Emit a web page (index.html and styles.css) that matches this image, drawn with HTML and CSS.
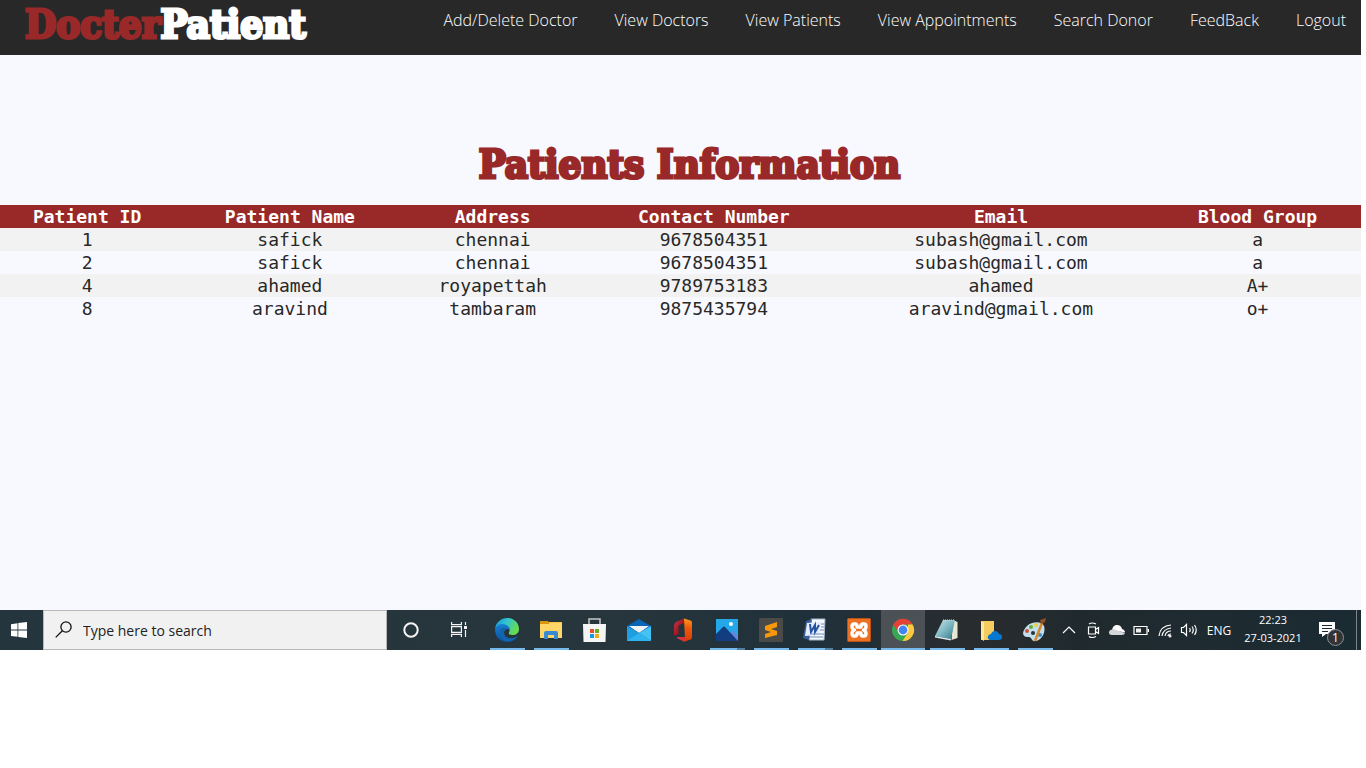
FILE: index.html
```html
<!DOCTYPE html>
<html lang="en">
<head>
<meta charset="utf-8">
<title>Patients Information</title>
<link rel="stylesheet" href="styles.css">
</head>
<body>
<div class="screen">
  <header class="site-header">
    <a class="logo" href="#"><span class="logo-accent">Docter</span>Patient</a>
    <nav class="site-nav">
      <a href="#">Add/Delete Doctor</a>
      <a href="#">View Doctors</a>
      <a href="#">View Patients</a>
      <a href="#">View Appointments</a>
      <a href="#">Search Donor</a>
      <a href="#">FeedBack</a>
      <a href="#">Logout</a>
    </nav>
  </header>

  <main class="content">
    <h1 class="title">Patients Information</h1>
    <table class="patients">
      <colgroup><col class="c-id"><col class="c-name"><col class="c-address"><col class="c-contact"><col class="c-email"><col class="c-blood"></colgroup>
      <thead>
        <tr><th>Patient ID</th><th>Patient Name</th><th>Address</th><th>Contact Number</th><th>Email</th><th>Blood Group</th></tr>
      </thead>
      <tbody>
        <tr><td>1</td><td>safick</td><td>chennai</td><td>9678504351</td><td>subash@gmail.com</td><td>a</td></tr>
        <tr><td>2</td><td>safick</td><td>chennai</td><td>9678504351</td><td>subash@gmail.com</td><td>a</td></tr>
        <tr><td>4</td><td>ahamed</td><td>royapettah</td><td>9789753183</td><td>ahamed</td><td>A+</td></tr>
        <tr><td>8</td><td>aravind</td><td>tambaram</td><td>9875435794</td><td>aravind@gmail.com</td><td>o+</td></tr>
      </tbody>
    </table>
  </main>

  <footer class="taskbar">
    <button class="start" aria-label="Start">
      <svg width="16" height="16" viewBox="0 0 16 16" fill="#fff"><path d="M0 2.2 6.5 1.2V7.4H0ZM7.3 1.1 16 0V7.4H7.3ZM0 8.4H6.5V14.8L0 13.9ZM7.3 8.4H16V16L7.3 14.9Z"/></svg>
    </button>
    <label class="search">
      <svg width="18" height="18" viewBox="0 0 18 18" fill="none" stroke="#111" stroke-width="1.3"><circle cx="11" cy="6" r="5.1"/><path d="M7.400 9.700 .7 16.400"/></svg>
      <input type="text" placeholder="Type here to search" aria-label="Type here to search">
    </label>
    <div class="tools">
      <button class="tool" aria-label="Cortana"><svg width="18" height="18" viewBox="0 0 18 18" fill="none" stroke="#f4f4f4" stroke-width="2"><circle cx="9" cy="9" r="6.7"/></svg></button>
      <button class="tool" aria-label="Task View"><svg width="18" height="18" viewBox="0 0 18 18" fill="none" stroke="#f4f4f4" stroke-width="1.2"><path d="M1.6 1V3.6H11.4V1M1.6 16V13.4H11.4V16M1.6 5.6H11.4V11.4H1.6ZM15.5 1V4M15.5 9V16"/><path d="M14 5h3v3h-3z" fill="#f4f4f4" stroke="none"/></svg></button>
    </div>
    <div class="apps">
      <button class="app running" aria-label="Edge"><svg width="24" height="24" viewBox="0 0 24 24">
        <defs><linearGradient id="edge-top" x1="0" x2="1" y2=".4"><stop offset="0" stop-color="#168fdb"/><stop offset=".5" stop-color="#32c5cf"/><stop offset="1" stop-color="#65dc50"/></linearGradient><linearGradient id="edge-low" x2="0" y2="1"><stop stop-color="#1682d2"/><stop offset="1" stop-color="#0a4f9d"/></linearGradient></defs>
        <path fill="url(#edge-top)" d="M0 11C1 4 6 0 12 0c7 0 12 5 12 11 0 4-3 6-6.500 6-3 0-4.500-1-3.500-2.500C16 11 12 6 7 7c-3 .5-6 2-7 4Z"/>
        <path fill="url(#edge-low)" d="M0 11c1-3 4-5 7-5 5 0 8 3 8 6-2-2-6-1-6 3s5 6 9 5c2-.4 3-1 4.500-2C20 22 16 24 12 24 5 24 0 19 0 11Z"/>
        <path fill="#1265ad" d="M5 12c2-3 6-3 8-2-3 0-4 3-4 5 0 4 5 6 9 5 2-.4 3-1 4.500-2-3 5-8 6-11 5.500C7 22 3 17 5 12Z"/>
      </svg></button>
      <button class="app running" aria-label="File Explorer"><svg width="24" height="24" viewBox="0 0 24 24"><path fill="#d9960b" d="M1 3h8l2 3H1Z"/><path fill="#f6c445" d="M10 4h13v5H10Z"/><path fill="#ffd768" d="M1 6h9l2-1h11v15H1Z"/><path fill="#388bd2" d="M7 13h10q2 0 2 2v6h-4v-4H9v4H5v-6q0-2 2-2Z"/></svg></button>
      <button class="app" aria-label="Store"><svg width="24" height="24" viewBox="0 0 24 24"><path fill="none" stroke="#c8c8c8" stroke-width="1.500" d="M6 7V1H17V7"/><path fill="#f5f5f5" d="M0 6h23l-.5 18H.5Z"/><path fill="#e95026" d="M7 11h4v4H7z"/><path fill="#69ae20" d="M12 11h4v4h-4z"/><path fill="#159bdc" d="M7 16h4v4H7z"/><path fill="#f2ad12" d="M12 16h4v4h-4z"/></svg></button>
      <button class="app" aria-label="Mail"><svg width="24" height="24" viewBox="0 0 24 24"><path fill="#0864b5" d="M0 8 12 1 24 8v5H0Z"/><path fill="#eef2f5" d="M2 8H22L12 15Z"/><path fill="#1f9fe2" d="M0 8 12 15 24 23H0Z"/><path fill="#43c2f4" d="M24 8v15L12 15Z"/><path fill="#2fb4ef" d="M12 15 24 23H0Z"/></svg></button>
      <button class="app" aria-label="Office"><svg width="24" height="24" viewBox="0 0 24 24">
        <defs><linearGradient id="office-left" x1="0" x2="1" y2="1"><stop stop-color="#c03a55"/><stop offset=".6" stop-color="#a5121c"/><stop offset="1" stop-color="#d2303a"/></linearGradient><linearGradient id="office-right" x2="0" y2="1"><stop stop-color="#ff9a1a"/><stop offset=".4" stop-color="#ee5a0c"/><stop offset="1" stop-color="#d83b06"/></linearGradient></defs>
        <path fill="url(#office-left)" d="M13.500.5 6.500 3.200Q3 4.700 3 8V16.500Q3 18 4.300 17.400L7.500 15.800V8.500Q7.500 7.300 8.600 6.900L13.500 5Z"/>
        <path fill="#d8323d" d="M6.500 19H14V23.700Q12.800 23.800 11.700 23.100L6 20.300Q5.200 19.200 6.500 19Z"/>
        <path fill="url(#office-right)" d="M13 .5 19.500 2.500Q21 3 21 4.500V19.500Q21 21 19.500 21.500L13 23.700Q14 23 14 21Z"/>
      </svg></button>
      <button class="app running grouped" aria-label="Photos"><svg width="24" height="24" viewBox="0 0 24 24"><path fill="#24a8e7" d="M1 1h22v22H1z"/><path fill="#6a83dc" d="m17 12 6 6v5H12Z"/><path fill="#123d80" d="M1 16 8 9q1-1 2 0L23 23H1Z"/><circle cx="16" cy="6" r="2" fill="#fff"/></svg></button>
      <button class="app running" aria-label="Sublime Text"><svg width="24" height="24" viewBox="0 0 24 24"><rect width="24" height="24" rx="1" fill="#4a4a49"/><path fill="#f7980b" d="m6 8 12-4v5l-6 2 6 2v4L6 20v-4l6-2-6-2Z"/></svg></button>
      <button class="app running grouped" aria-label="Word"><svg width="24" height="24" viewBox="0 0 24 24"><path fill="#f5f8fc" stroke="#a7b6cd" d="M8 1h14l-1 21H6Z"/><path fill="#385f9c" d="M3 3 9 1 6 22 0 20Z"/><path fill="#e4edf9" d="m4 5 14-1-2 13-14 1Z"/><path stroke="#2553a0" fill="none" stroke-width="2" d="m7 6 1 8 4-7v7l4-7"/><path stroke="#6d8bb9" d="M8 16h13M7 19h13M18 6h3M18 9h3M17 12h4"/></svg></button>
      <button class="app running" aria-label="XAMPP"><svg width="24" height="24" viewBox="0 0 24 24"><rect x=".5" y=".5" width="23" height="23" rx="1" fill="#ed7122" stroke="#ba5216"/><path fill="none" stroke="#fff" stroke-width="3.400" stroke-linejoin="round" stroke-linecap="round" d="M7 6H8Q10 6 10 8V9H14V8Q14 6 16 6H17Q19 6 19 8.500T16.500 12Q19 13 19 15.500T17 18H16Q14 18 14 16V15H10V16Q10 18 8 18H7Q5 18 5 15.500T7.500 12Q5 11 5 8.500T7 6Z"/></svg></button>
      <button class="app running active" aria-label="Chrome"><svg width="24" height="24" viewBox="0 0 24 24"><circle cx="12" cy="12" r="11" fill="#36a852"/><path fill="#e44234" d="M2.400 6.500A11 11 0 0 1 21.600 6.500H12L7.500 14.500Z"/><path fill="#fbca3e" d="M21.600 6.500A11 11 0 0 1 11.500 23L17 14.500V6.500Z"/><circle cx="12" cy="12" r="5.500" fill="#fff"/><circle cx="12" cy="12" r="4.400" fill="#4385f4"/></svg></button>
      <button class="app running" aria-label="Notepad"><svg width="24" height="24" viewBox="0 0 24 24">
        <defs><linearGradient id="pad" x1="0" x2="1" y2="1"><stop stop-color="#cfe6ea"/><stop offset=".5" stop-color="#7fb9c4"/><stop offset="1" stop-color="#2f7787"/></linearGradient></defs>
        <path fill="#e9e6d2" d="m18 2 4.500 2V20l-6 2Z"/><path fill="url(#pad)" d="M8 2h12l-4 19L0 18Z"/><path fill="#dcebec" d="M0 18l16 3-.3 1.500L0 19.500Z"/><path stroke="#ddd" stroke-dasharray="1 1" d="M8 2h12"/></svg></button>
      <button class="app running" aria-label="OneDrive folder"><svg width="24" height="24" viewBox="0 0 24 24"><path fill="#f6cc61" d="M2 3h13v19H2Z"/><path fill="#ffe79b" d="m2 3 3 2v18l-3-2Z"/><path fill="#0878d1" d="M11 22q-3-1-2-4 1-2 3-2 1-3 4-3t4 3q3 0 3 3t-3 3Z"/></svg></button>
      <button class="app running" aria-label="Paint"><svg width="24" height="24" viewBox="0 0 24 24"><path fill="#c2dfed" d="M4 8C9 3 19 3 21 8c2 6-2 14-8 15-5 1-4-4-7-4-7 1-8-5-2-11Z"/><circle cx="4" cy="13" r="2" fill="#d04e39"/><circle cx="8" cy="9" r="2" fill="#66ad37"/><circle cx="13" cy="7" r="2" fill="#f1cd3d"/><circle cx="17" cy="17" r="2" fill="#378dcc"/><circle cx="10" cy="15" r="2" fill="#263238"/><path stroke="#d3872d" stroke-width="2.500" d="M19 5 12 23"/><path fill="#8c5127" d="m18 6-1-4 6-2-1 4Z"/></svg></button>
    </div>
    <div class="tray">
      <button class="tray-icon" aria-label="Show hidden icons"><svg width="16" height="16" viewBox="0 0 16 16"><path d="m2 11 6-6 6 6"/></svg></button>
      <button class="tray-icon" aria-label="Meet Now"><svg width="16" height="16" viewBox="0 0 16 16"><path d="M3.500 5h7v7h-7zM10.500 7.500l3-2v6l-3-2M4 2q3-2 7 0M4 14.500q3 2 7 0"/></svg></button>
      <button class="tray-icon" aria-label="OneDrive"><svg width="16" height="16" viewBox="0 0 16 16"><path fill="#fff" stroke="none" d="M3 8Q4 3 8 3t5 4q3 1 3 3.500Z"/><path class="cloud-front" d="M3 13q-3 0-3-2.500T3 7.500q2-1 4 .5l9 3q-.5 2-3 2Z"/></svg></button>
      <button class="tray-icon" aria-label="Battery"><svg width="16" height="16" viewBox="0 0 16 16"><path d="M1 4.500h13v8H1zM15.500 7v3"/><path class="solid" d="M3 6.500h5v4H3z"/></svg></button>
      <button class="tray-icon" aria-label="Network"><svg width="16" height="16" viewBox="0 0 16 16"><path d="M2 14Q3 4 14 3M5 14q1-7 9-8M8 14q1-5 6-5M11 14q0-2 3-2"/><circle class="solid" cx="13" cy="14" r="1.500"/></svg></button>
      <button class="tray-icon" aria-label="Volume"><svg width="18" height="16" viewBox="0 0 18 16"><path d="M1.500 5.500h2l3-3v11l-3-3h-2zM9.500 6q1.500 2 0 4M12 4.500q2.500 3.500 0 7M14.500 3q3.500 5 0 10"/></svg></button>
      <button class="language">ENG</button>
      <button class="clock"><span>22:23</span><span>27-03-2021</span></button>
      <button class="notifications" aria-label="1 notification">
        <svg width="24" height="24" viewBox="0 0 24 24"><path fill="#fff" d="M0 4h16v12H7l-4 3v-3H0Z"/><path stroke="#1d2b31" d="M3 7.500h10M3 10.500h10M3 13.500h6"/></svg>
        <span class="badge">1</span>
      </button>
    </div>
  </footer>
</div>
</body>
</html>
```
FILE: styles.css
```css
* { box-sizing: border-box; }

body {
  margin: 0;
  background: #fff;
  color: #282828;
  font-family: "Open Sans", "Noto Sans", sans-serif;
}

button {
  padding: 0;
  border: 0;
  background: none;
  color: inherit;
  font: inherit;
}

svg { display: block; }

.screen {
  margin-right: 5px;
  background: #f8f9ff;
}

.site-header {
  display: flex;
  justify-content: space-between;
  height: 55px;
  padding: 0 15px 0 25px;
  background: #282828;
}

.logo,
.title {
  font-family: "DejaVu Serif Condensed", "DejaVu Serif", serif;
  font-size: 40px;
  font-weight: 700;
  line-height: 48px;
  -webkit-text-stroke: 3px currentColor;
}

.logo {
  color: #fff;
  text-decoration: none;
}

.logo-accent { color: #992829; }

.site-nav {
  display: flex;
  gap: 37px;
  padding-top: 8px;
}

.site-nav a {
  color: #fff;
  font-size: 16px;
  font-weight: 300;
  line-height: 24px;
  text-decoration: none;
  white-space: nowrap;
}

.content { padding: 85px 0 290px; }

.title {
  margin: 0 0 17px;
  padding-left: 18px;
  color: #992829;
  text-align: center;
}

.patients {
  width: 100%;
  border-collapse: collapse;
  table-layout: fixed;
  font-family: "DejaVu Sans Mono", monospace;
  font-size: 18px;
  line-height: 23px;
  text-align: center;
}

.patients th,
.patients td { padding: 0; }

.patients th {
  background: #992829;
  color: #fff;
}

.patients tbody tr:nth-child(odd) { background: #f2f2f2; }

.c-id, .c-address { width: 12.8%; }
.c-name { width: 17%; }
.c-contact { width: 19.7%; }
.c-email { width: 22.5%; }
.c-blood { width: 15.2%; }

.taskbar {
  display: flex;
  height: 40px;
  background: linear-gradient(90deg, #24353d 0%, #27363c 45%, #20303a 60%, #292c2e 72%, #202a2e 79%, #1b2b33 100%);
  color: #fff;
}

.start {
  display: grid;
  place-items: center;
  width: 43px;
  padding-right: 5px;
}

.search {
  display: flex;
  align-items: center;
  gap: 10px;
  width: 344px;
  padding-left: 11px;
  border: 1px solid #b9b9b9;
  background: #f1f1f1;
}

.search input {
  flex: 1;
  min-width: 0;
  padding: 0;
  border: 0;
  background: none;
  color: #222;
  font-family: "Open Sans", sans-serif;
  font-size: 14px;
}

.search input::placeholder {
  color: #222;
  opacity: 1;
}

.tools,
.apps,
.tray { display: flex; }

.apps { margin-left: 2px; }

.tool {
  display: grid;
  place-items: center;
  width: 48px;
}

.app {
  display: flex;
  flex-direction: column;
  align-items: center;
  justify-content: space-between;
  width: 44px;
  padding-top: 8px;
}

.running::after {
  content: "";
  width: 35px;
  height: 2px;
  background: #76b9ed;
}

.grouped::after { background: linear-gradient(90deg, #76b9ed 27px, #527f9f 27px); }
.active { background: #4c5155; }
.active::after { width: 100%; }

.tray {
  margin-left: auto;
  padding-right: 3px;
  margin-right: 4px;
  border-right: 1px solid #7d858a;
}

.tray-icon {
  display: grid;
  place-items: center;
  width: 24px;
}

.tray-icon svg {
  fill: none;
  stroke: #fff;
  stroke-width: 1.2;
}

.tray-icon .solid {
  fill: #eee;
  stroke: none;
}

.tray-icon .cloud-front {
  fill: #d3d6d8;
  stroke: none;
}

.language {
  width: 36px;
  font-size: 12px;
}

.clock {
  display: flex;
  flex-direction: column;
  align-items: center;
  justify-content: center;
  width: 72px;
  padding-bottom: 2px;
  font-size: 11px;
  line-height: 18px;
}

.notifications {
  position: relative;
  display: flex;
  align-items: center;
  width: 44px;
  padding-left: 10px;
}

.badge {
  position: absolute;
  top: 19px;
  left: 18px;
  width: 17px;
  height: 17px;
  border: 1px solid #8b9296;
  border-radius: 50%;
  background: #303436;
  font-size: 12px;
  line-height: 15px;
  text-align: center;
}
```
